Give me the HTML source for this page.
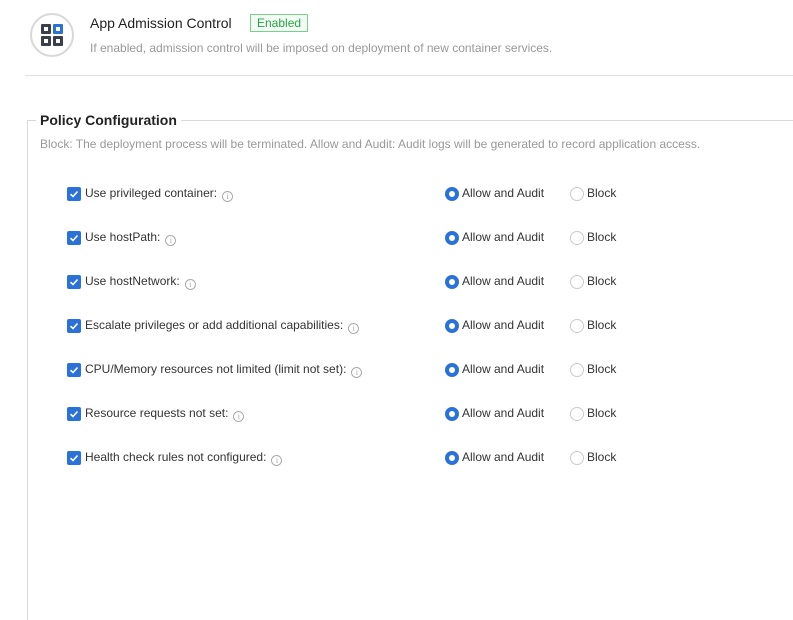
<!DOCTYPE html>
<html><head><meta charset="utf-8"><style>
*{margin:0;padding:0;box-sizing:border-box}
body{width:793px;height:523px;overflow:hidden;background:#fff;font-family:"Liberation Sans",Arial,sans-serif;color:#333;position:relative}
.abs{position:absolute}
.icon{left:30px;top:13px;width:44px;height:44px;border:2px solid #d8d8d8;border-radius:50%}
.sq{position:absolute;width:10px;height:10px;background:#3a3f4b;border-radius:1px}
.sq i{position:absolute;left:3px;top:3px;width:4px;height:4px;background:#fff}
.title{left:90px;top:15px;font-size:14px;color:#222}
.tag{left:250px;top:14px;font-size:12px;color:#2ba245;border:1px solid #7bcf8a;background:#f2fbf4;padding:1px 6px;line-height:14px}
.desc{left:90px;top:41px;font-size:12px;color:#999}
.hr{left:25px;top:75px;width:768px;height:1px;background:#e2e2e2}
.fs{left:27px;top:120px;width:800px;height:500px;border-left:1px solid #d8d8d8;border-top:1px solid #d8d8d8}
.legend{left:36px;top:112px;background:#fff;padding:0 4px;font-size:14px;font-weight:bold;color:#222}
.note{left:40px;top:137px;font-size:12px;color:#999}
.cb{left:67px;width:14px;height:14px;background:#2a72d8;border-radius:2px}
.cb svg{position:absolute;left:2px;top:2px}
.lbl{left:85px;font-size:12px;line-height:14px;color:#333;white-space:nowrap}
.info{display:inline-block;width:11px;height:11px;border:1px solid #aaa;border-radius:50%;font-size:8px;color:#aaa;text-align:center;line-height:10px;margin-left:5px;vertical-align:-2px;font-family:"Liberation Serif",serif}
.r1{left:445px;width:14px;height:14px;border-radius:50%;border:4px solid #2a72d8;background:#fff}
.r2{left:570px;width:14px;height:14px;border-radius:50%;border:1px solid #ccc;background:#fff}
.t{font-size:12px;line-height:14px;color:#333}
</style></head><body>
<div class="abs icon">
 <div class="sq" style="left:9px;top:9px"><i></i></div>
 <div class="sq" style="left:21px;top:9px;background:#2a72d8"><i></i></div>
 <div class="sq" style="left:9px;top:21px"><i></i></div>
 <div class="sq" style="left:21px;top:21px"><i></i></div>
</div>
<div class="abs title">App Admission Control</div>
<div class="abs tag">Enabled</div>
<div class="abs desc">If enabled, admission control will be imposed on deployment of new container services.</div>
<div class="abs hr"></div>
<div class="abs fs"></div>
<div class="abs legend">Policy Configuration</div>
<div class="abs note">Block: The deployment process will be terminated. Allow and Audit: Audit logs will be generated to record application access.</div>
<div id="rows"></div>
<script>
var L=["Use privileged container:","Use hostPath:","Use hostNetwork:","Escalate privileges or add additional capabilities:","CPU/Memory resources not limited (limit not set):","Resource requests not set:","Health check rules not configured:"];
var h="";
L.forEach(function(s,i){var y=193+44*i;
h+='<div class="abs cb" style="top:'+(y-6)+'px"><svg width="10" height="10" viewBox="0 0 10 10"><path d="M1.5 5.2L4 7.5L8.5 2.5" stroke="#fff" stroke-width="1.6" fill="none"/></svg></div>';
h+='<div class="abs lbl" style="top:'+(y-7)+'px">'+s+'<span class="info">i</span></div>';
h+='<div class="abs r1" style="top:'+(y-6)+'px"></div><div class="abs t" style="left:462px;top:'+(y-7)+'px">Allow and Audit</div>';
h+='<div class="abs r2" style="top:'+(y-6)+'px"></div><div class="abs t" style="left:587px;top:'+(y-7)+'px">Block</div>';});
document.getElementById("rows").innerHTML=h;
</script>
</body></html>
